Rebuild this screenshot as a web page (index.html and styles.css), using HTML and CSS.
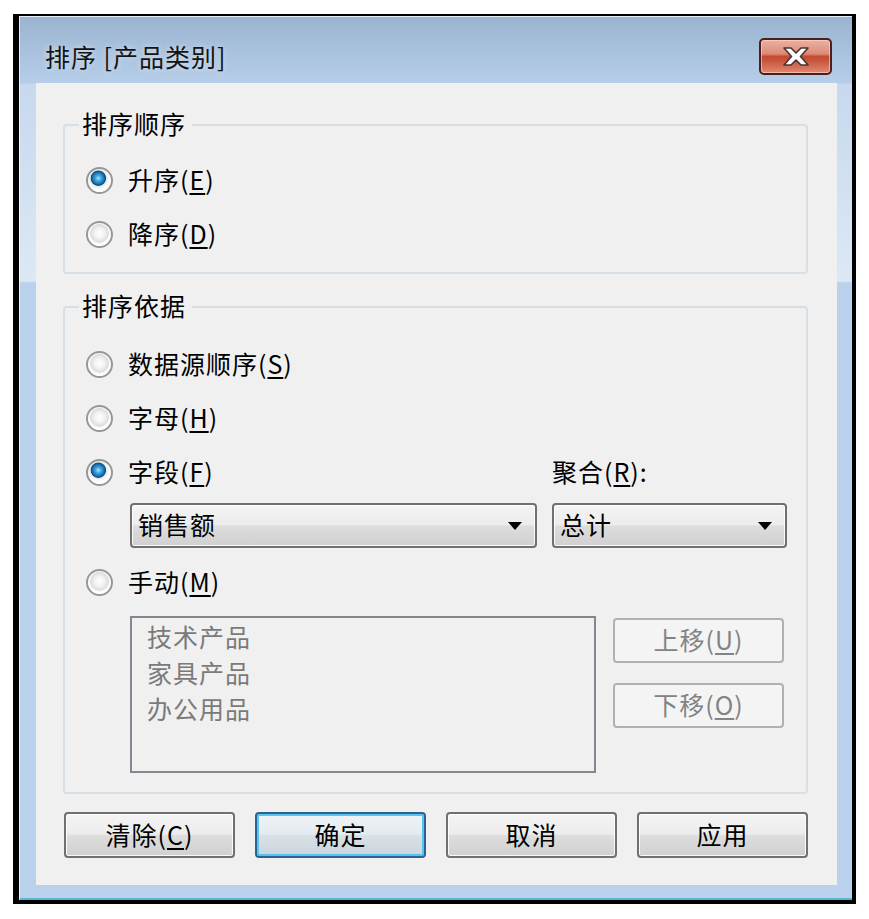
FILE: index.html
```html
<!DOCTYPE html>
<html lang="zh-CN">
<head>
<meta charset="utf-8">
<title>排序 [产品类别]</title>
<link rel="stylesheet" href="styles.css">
</head>
<body>
<div class="window">
  <div class="titlebar">
    <span class="title">排序 [产品类别]</span>
    <button class="close" aria-label="关闭">
      <svg width="26" height="19" viewBox="0 0 26 19"><polygon points="1,1 8,1 13,6 18,1 25,1 17.5,9.5 25,18 18,18 13,13 8,18 1,18 8.5,9.5" fill="#ffffff" stroke="#4a3434" stroke-width="1.6" stroke-linejoin="round"/></svg>
    </button>
  </div>
  <div class="panel">
    <fieldset class="group g1">
      <legend>排序顺序</legend>
      <div class="body">
        <div class="row"><span class="radio checked"></span><span class="lbl">升序(<u>E</u>)</span></div>
        <div class="row"><span class="radio"></span><span class="lbl">降序(<u>D</u>)</span></div>
      </div>
    </fieldset>
    <fieldset class="group g2">
      <legend>排序依据</legend>
      <div class="body">
        <div class="row"><span class="radio"></span><span class="lbl">数据源顺序(<u>S</u>)</span></div>
        <div class="row"><span class="radio"></span><span class="lbl">字母(<u>H</u>)</span></div>
        <div class="field-row">
          <div class="row field-opt"><span class="radio checked"></span><span class="lbl">字段(<u>F</u>)</span></div>
          <span class="lbl">聚合(<u>R</u>):</span>
        </div>
        <div class="selects">
          <div class="combo c1"><span class="lbl">销售额</span><i class="arrow"></i></div>
          <div class="combo c2"><span class="lbl">总计</span><i class="arrow"></i></div>
        </div>
        <div class="row manual-row"><span class="radio"></span><span class="lbl">手动(<u>M</u>)</span></div>
        <div class="manual">
          <div class="listbox">
            <div>技术产品</div>
            <div>家具产品</div>
            <div>办公用品</div>
          </div>
          <div class="movebtns">
            <button class="btn disabled">上移(<u>U</u>)</button>
            <button class="btn disabled">下移(<u>O</u>)</button>
          </div>
        </div>
      </div>
    </fieldset>
    <div class="actions">
      <button class="btn">清除(<u>C</u>)</button>
      <button class="btn default">确定</button>
      <button class="btn">取消</button>
      <button class="btn">应用</button>
    </div>
  </div>
</div>
</body>
</html>
```
FILE: styles.css
```css
html, body {
  margin: 0;
  background: #ffffff;
}
body {
  font-family: "Noto Sans CJK SC", "Noto Sans", sans-serif;
  font-size: 25px;
  letter-spacing: 1px;
  color: #000;
}
u {
  text-decoration-thickness: 2px;
  text-underline-offset: 3px;
}
.lbl {
  padding-bottom: 3px;
}
.window {
  box-sizing: border-box;
  width: 843px;
  height: 890px;
  margin: 14px 0 0 13px;
  border-style: solid;
  border-color: #000;
  border-width: 2px 4px 4px 6px;
  background: linear-gradient(to bottom, #9ab3d0 0px, #b6cee8 67px, #c7d9ee 68px, #dce8f5 265px, #b9d1ea 267px, #b9d1ea 100%);
  box-shadow: inset 1px 1px 0 rgba(255,255,255,0.75), inset 0 -2px 0 #58b6d3;
  display: flex;
  flex-direction: column;
}
.titlebar {
  height: 67px;
  display: flex;
  align-items: flex-start;
  padding: 0 20px 0 26px;
  box-sizing: border-box;
  flex: none;
}
.title {
  margin-top: 25px;
  line-height: 30px;
  color: #141414;
  text-shadow: 0 0 6px rgba(255,255,255,0.6);
}
.close {
  margin-left: auto;
  margin-top: 22px;
  width: 73px;
  height: 37px;
  box-sizing: border-box;
  border: 2px solid #4b1f20;
  border-radius: 5px;
  padding: 0;
  background: linear-gradient(to bottom, #eab0a2 0%, #dd8b78 42%, #c44a31 50%, #c6553c 62%, #e08a72 100%);
  box-shadow: inset 0 0 0 1px rgba(255,220,210,0.6);
  display: flex;
  align-items: center;
  justify-content: center;
}
.panel {
  margin: 0 15px 15px 17px;
  height: 802px;
  box-sizing: border-box;
  padding: 27px 29px 27px 27px;
  background: #f0f0f0;
}
.group {
  margin: 0;
  padding: 0;
  min-width: 0;
  border: 2px solid #d6dfe6;
  border-radius: 4px;
}
.group legend {
  margin-left: 14px;
  padding: 0 6px 3px 3px;
  height: 30px;
  box-sizing: border-box;
  line-height: 27px;
}
.g1 .body {
  padding: 13px 0 11px 21px;
}
.g2 {
  margin-top: 18px;
}
.g2 .body {
  padding: 15px 0 19px 21px;
}
.row {
  display: flex;
  align-items: center;
  height: 54px;
}
.radio {
  flex: none;
  width: 27px;
  height: 27px;
  margin-right: 15px;
  box-sizing: border-box;
  border-radius: 50%;
  border: 2px solid #979797;
  background: radial-gradient(circle at 50% 45%, #ffffff 0px, #f2f2f2 5px, #dcdcdc 9px, #f6f6f6 9.5px, #ffffff 11.5px);
}
.radio.checked {
  background: radial-gradient(circle at 45% 40%, #a8e4ff 0px, #3aa4e2 3px, #1a6ea8 6px, #10456e 7.2px, #d9e6ee 8px, #f4f4f4 9.5px, #ffffff 11.5px);
}
.field-row {
  display: flex;
  align-items: center;
  height: 54px;
}
.field-opt {
  width: 466px;
  flex: none;
}
.selects {
  display: flex;
  gap: 15px;
  margin: 4px 0 0 44px;
}
.combo {
  box-sizing: border-box;
  height: 45px;
  border: 2px solid #707070;
  border-radius: 4px;
  background: linear-gradient(to bottom, #f4f4f4 0%, #ececec 48%, #dddddd 52%, #d0d0d0 100%);
  box-shadow: inset 0 0 0 1px rgba(255,255,255,0.85);
  display: flex;
  align-items: center;
  padding-left: 6px;
}
.c1 { width: 407px; }
.c2 { width: 235px; }
.arrow {
  margin-left: auto;
  margin-right: 13px;
  width: 0;
  height: 0;
  border-left: 7px solid transparent;
  border-right: 7px solid transparent;
  border-top: 8px solid #000;
}
.manual-row {
  margin-top: 7px;
}
.manual {
  display: flex;
  gap: 17px;
  margin: 7px 0 0 44px;
}
.listbox {
  box-sizing: border-box;
  width: 466px;
  height: 157px;
  border: 2px solid #828790;
  padding: 0 0 0 15px;
  line-height: 36px;
  color: #7a7a7a;
}
.movebtns {
  display: flex;
  flex-direction: column;
  gap: 20px;
  padding-top: 2px;
}
.btn {
  box-sizing: border-box;
  width: 171px;
  height: 45px;
  border: 2px solid #707070;
  border-radius: 4px;
  padding: 0 0 3px;
  font: inherit;
  letter-spacing: inherit;
  color: #000;
  background: linear-gradient(to bottom, #f4f4f4 0%, #ececec 48%, #dddddd 52%, #d0d0d0 100%);
  box-shadow: inset 0 0 0 1px rgba(255,255,255,0.85);
  display: flex;
  align-items: center;
  justify-content: center;
}
.btn.disabled {
  border-color: #adb2b5;
  background: #f4f4f4;
  color: #838383;
  box-shadow: none;
}
.btn.default {
  border-color: #2c628b;
  background: linear-gradient(to bottom, #eef3f6 0%, #e4ebf0 48%, #d8e0e6 52%, #ccd5dc 100%);
  box-shadow: inset 0 0 0 2px #55c4ef;
}
.actions {
  display: flex;
  gap: 20px;
  margin: 18px 0 0 1px;
}
.actions .btn {
  height: 46px;
}
```
